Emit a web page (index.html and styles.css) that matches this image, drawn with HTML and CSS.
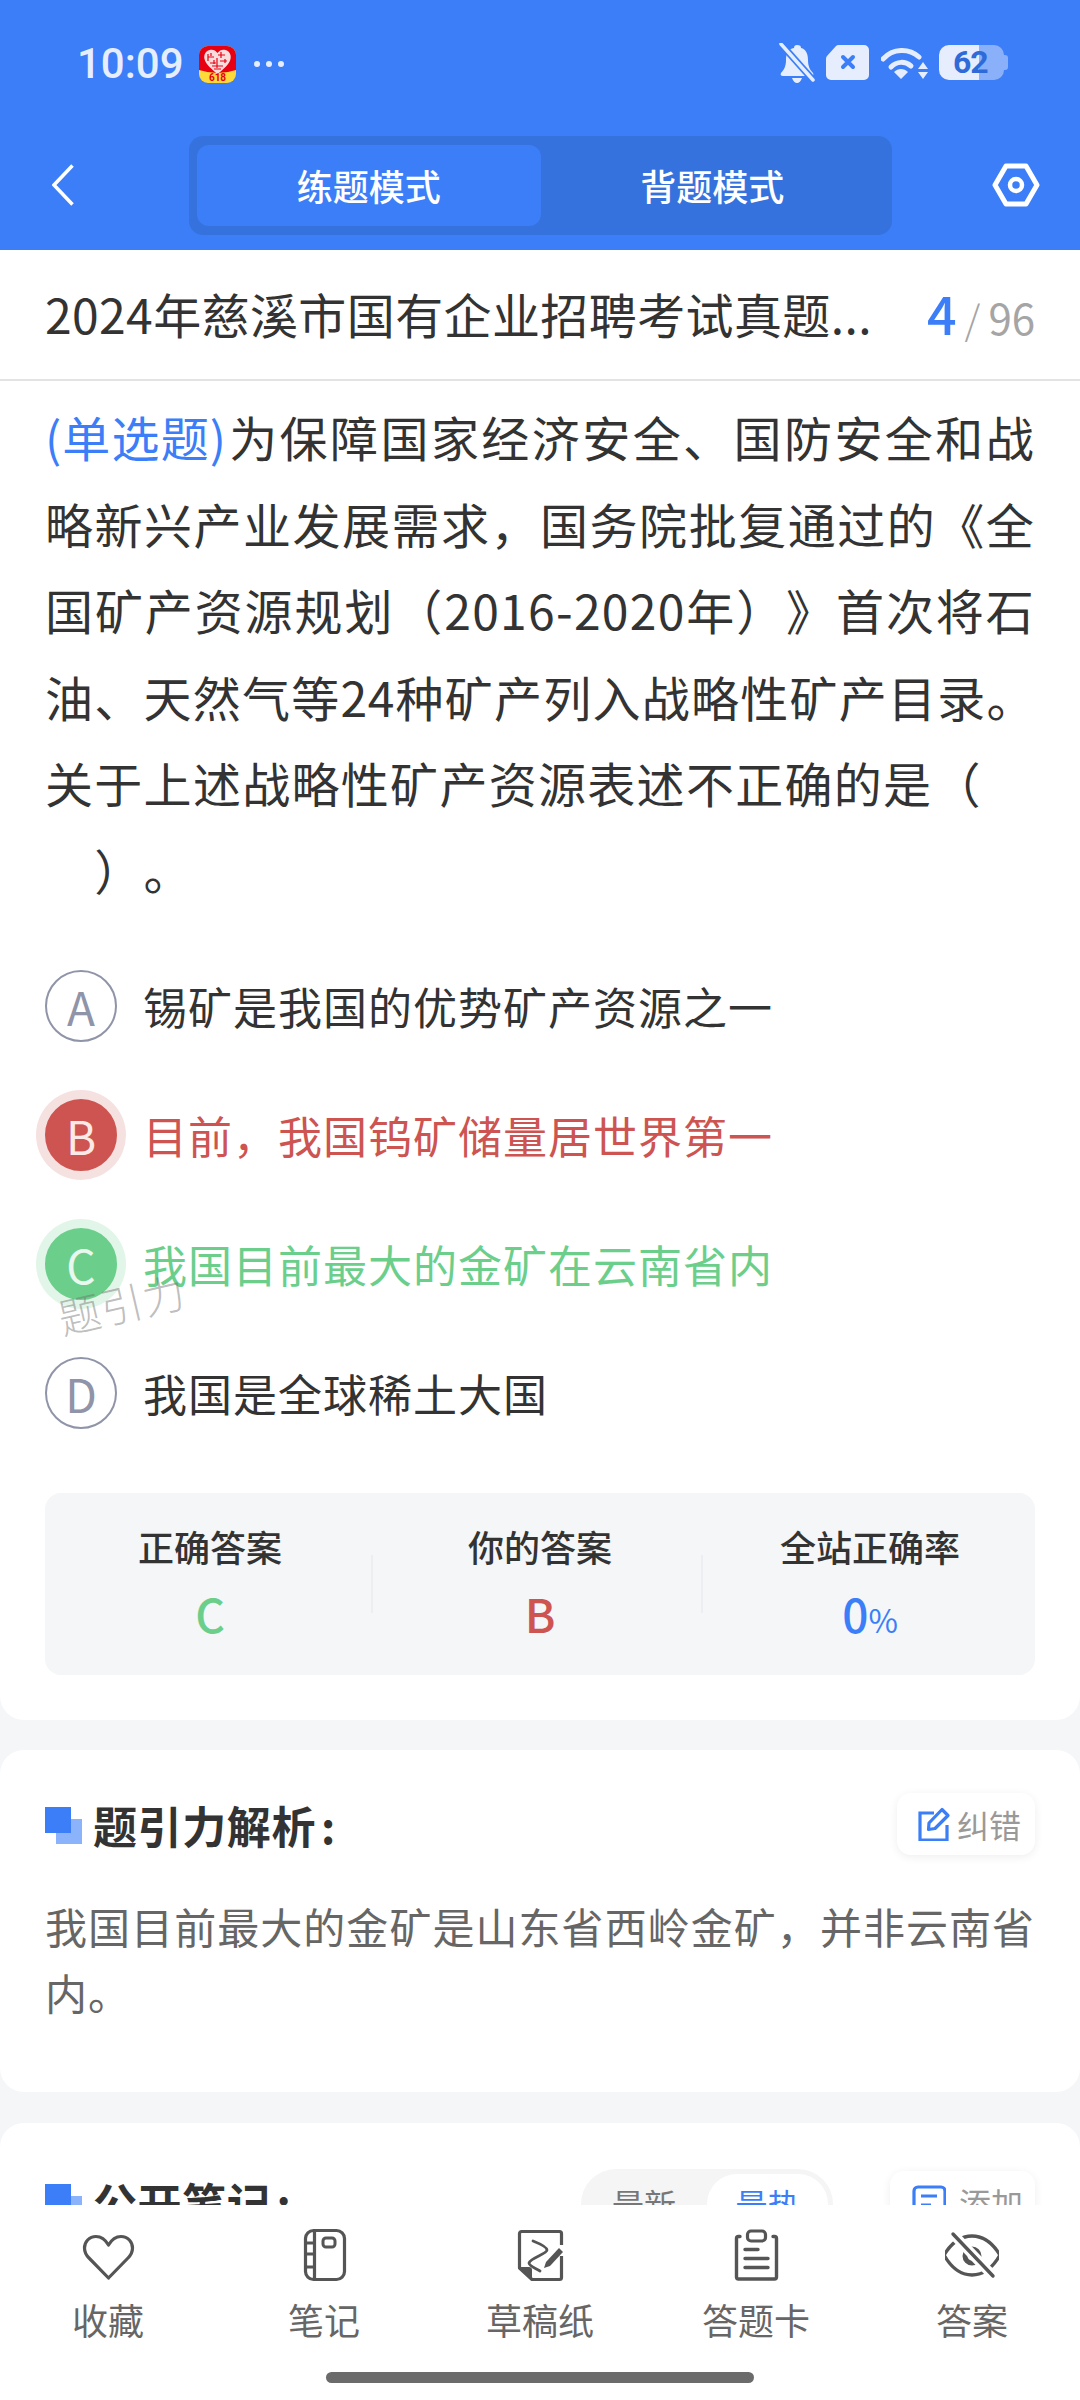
FILE: index.html
```html
<!DOCTYPE html>
<html lang="zh">
<head>
<meta charset="utf-8">
<title>练题模式</title>
<link rel="stylesheet" href="styles.css">
</head>
<body>
<div class="phone">
  <div class="scroll">
    <header class="top">
      <div class="status">
        <div class="status-left">
          <span class="time">10:09</span>
          <svg class="app" viewBox="0 0 37 37"><rect width="37" height="37" rx="9" fill="#ffd83a"/><path d="M0 9a9 9 0 0 1 9-9h19a9 9 0 0 1 9 9v15q-18 6-37 0z" fill="#e60012"/><path d="M18.500 7c-2-3-5-4-8-3-4 1-6 5-5 9 1 5 8 11 13 15 5-4 12-10 13-15 1-4-1-8-5-9-3-1-6 0-8 3z" fill="#f9dcdc"/><path d="M9 8v7M12 7v3M9 11h6M15 14v4M11 17h6M22 6v6M19 9h7M26 13v4M21 15h7M18 12v10M13 20h11M15 23h7" stroke="#e60012" stroke-width="1.200" fill="none"/><text class="app-text" x="18.500" y="34.500" text-anchor="middle">618</text></svg>
          <svg class="dots" viewBox="0 0 32 8"><circle cx="4" cy="4" r="3" fill="#e6eefe"/><circle cx="16" cy="4" r="3" fill="#e6eefe"/><circle cx="28" cy="4" r="3" fill="#e6eefe"/></svg>
        </div>
        <div class="status-right">
          <svg class="s-bell" viewBox="0 0 36 40"><path d="M18 2c-2 0-3 1-3 3C9 6 7 11 7 17c0 6-2 10-5 13-1 2 0 3 2 3h28c2 0 3-1 2-3-3-3-5-7-5-13 0-6-2-11-7-12 0-2-1-3-4-3zM13 35h10c-1 3-3 5-5 5s-4-2-5-5z" fill="#e6eefe"/><path d="M2 1l32 36" stroke="#3b7ef8" stroke-width="7"/><path d="M2 1l32 36" stroke="#e6eefe" stroke-width="3.500" stroke-linecap="round"/></svg>
          <svg class="s-sim" viewBox="0 0 43 35"><path d="M13 0h25a5 5 0 0 1 5 5v25a5 5 0 0 1-5 5H5a5 5 0 0 1-5-5V14q0-2 1-3l9-10q1-1 3-1z" fill="#e6eefe"/><path d="M17 12l10 10M27 12L17 22" stroke="#3b7ef8" stroke-width="4" stroke-linecap="round"/></svg>
          <svg class="s-wifi" viewBox="0 0 47 34"><path d="M2 13C12 2 28 2 38 11" fill="none" stroke="#e6eefe" stroke-width="5" stroke-linecap="round"/><path d="M10 21c6-6 14-6 20-1" fill="none" stroke="#e6eefe" stroke-width="5" stroke-linecap="round"/><path d="M13 26c4-4 10-4 14 0l-7 7z" fill="#e6eefe"/><path d="M42 16l5 7H37zM37 26h10l-5 7z" fill="#e6eefe"/></svg>
          <div class="battery">
            <span class="batt-num">62</span>
          </div>
        </div>
      </div>
      <nav class="bar">
        <svg class="back" viewBox="0 0 22 42"><path d="M20.500 1.500L2 21l18.500 19.500" fill="none" stroke="#fff" stroke-width="3.500"/></svg>
        <div class="tabs">
          <span class="tab tab-on">练题模式</span>
          <span class="tab">背题模式</span>
        </div>
        <svg class="hex" viewBox="0 0 48 44"><path d="M14 3h20l11 19-11 19H14L3 22z" fill="none" stroke="#fff" stroke-width="5" stroke-linejoin="round"/><circle cx="24" cy="22" r="6" fill="none" stroke="#fff" stroke-width="4.500"/></svg>
      </nav>
    </header>

    <section class="card question-card">
      <div class="title-row">
        <span class="paper-title">2024年慈溪市国有企业招聘考试真题...</span>
        <span class="counter"><b class="cur">4</b><i class="slash">/</i><span class="total">96</span></span>
      </div>
      <div class="question">
        <span class="ln"><span class="qtype">(单选题)</span><span>为保障国家经济安全、国防安全和战</span></span>
        <span class="ln">略新兴产业发展需求，国务院批复通过的《全</span>
        <span class="ln">国矿产资源规划（2016-2020年）》首次将石</span>
        <span class="ln ln-tight">油、天然气等24种矿产列入战略性矿产目录。</span>
        <span class="ln-end">关于上述战略性矿产资源表述不正确的是（</span>
        <span class="ln-end">　）。</span>
      </div>
      <div class="options">
        <div class="option"><span class="mark">A</span><span>锡矿是我国的优势矿产资源之一</span></div>
        <div class="option wrong"><span class="mark">B</span><span>目前，我国钨矿储量居世界第一</span></div>
        <div class="option right"><span class="mark">C</span><span>我国目前最大的金矿在云南省内</span><span class="watermark">题引力</span></div>
        <div class="option"><span class="mark">D</span><span>我国是全球稀土大国</span></div>
      </div>
      <div class="stats">
        <div class="stat"><span class="stat-label">正确答案</span><span class="stat-value green">C</span></div>
        <div class="stat"><span class="stat-label">你的答案</span><span class="stat-value red">B</span></div>
        <div class="stat"><span class="stat-label">全站正确率</span><span class="stat-value blue">0<small class="pct">%</small></span></div>
      </div>
    </section>

    <section class="card analysis">
      <div class="head">
        <h2 class="head-title"><span class="squares"></span>题引力解析<span class="colon">:</span></h2>
        <div class="chip">
          <svg class="chip-icon" viewBox="0 0 34 34"><path d="M17 6H3v27h27V18" fill="none" stroke="#3b7ef8" stroke-width="3.200"/><path d="M12 16L25 2.500l6 6L18 21.500l-6.500 1z" fill="none" stroke="#3b7ef8" stroke-width="3.200" stroke-linejoin="round"/></svg>
          <span>纠错</span>
        </div>
      </div>
      <p class="analysis-text">我国目前最大的金矿是山东省西岭金矿，并非云南省内。</p>
    </section>

    <section class="card notes">
      <div class="head">
        <h2 class="head-title"><span class="squares"></span>公开笔记<span class="colon">:</span></h2>
        <div class="head-right">
          <div class="segment"><span class="seg">最新</span><span class="seg seg-on">最热</span></div>
          <div class="chip chip-add">
            <svg class="chip-icon" viewBox="0 0 34 34"><rect x="2" y="2" width="31" height="29" rx="4" fill="none" stroke="#3b7ef8" stroke-width="3.200"/><path d="M9 11h16M9 20h10" stroke="#3b7ef8" stroke-width="3.200"/></svg>
            <span>添加</span>
          </div>
        </div>
      </div>
    </section>
  </div>

  <footer class="dock">
    <div class="tools">
      <div class="tool">
        <svg class="tool-icon" viewBox="0 0 54 54"><path d="M27.500 17C24 11 20 8.500 15 8.500 8 8.500 3.500 14 3.500 20c0 4 1.500 7 4.500 10l19.500 20L47 30c3-3 4.500-6 4.500-10 0-6-4.500-11.500-11.500-11.500-5 0-9 2.500-12.500 8.500z" fill="none" stroke="#555" stroke-width="3.200" stroke-linejoin="round"/></svg>
        <span>收藏</span>
      </div>
      <div class="tool">
        <svg class="tool-icon" viewBox="0 0 54 54"><rect x="8.500" y="2.500" width="39" height="49" rx="8" fill="none" stroke="#555" stroke-width="3.200"/><path d="M17.500 2.500v49M8.500 15h9M8.500 26h9M8.500 39h9" fill="none" stroke="#555" stroke-width="3.200"/><rect x="26" y="10" width="12" height="9" rx="3" fill="none" stroke="#555" stroke-width="3"/></svg>
        <span>笔记</span>
      </div>
      <div class="tool">
        <svg class="tool-icon" viewBox="0 0 54 54"><path d="M48.500 17V5.500a2 2 0 0 0-2-2H8.500a2 2 0 0 0-2 2V40L19 51.500h27.500a2 2 0 0 0 2-2V28" fill="none" stroke="#555" stroke-width="3.200" stroke-linejoin="round"/><path d="M6.500 39H16q3 0 3 3v9.500z" fill="#555"/><path d="M20 13c5 2 14 6 14 9 0 4-17 8-18 13 0 3 6 5 11 8" fill="none" stroke="#555" stroke-width="2.800" stroke-linecap="round"/><path d="M31 40l2-6 13-14 4 4-13 14z" fill="#555"/></svg>
        <span>草稿纸</span>
      </div>
      <div class="tool">
        <svg class="tool-icon" viewBox="0 0 54 54"><path d="M11 8.500H9.500a2 2 0 0 0-2 2V49a2 2 0 0 0 2 2h36a2 2 0 0 0 2-2V10.500a2 2 0 0 0-2-2H44" fill="none" stroke="#555" stroke-width="3.400" stroke-linecap="round"/><rect x="18.500" y="3" width="18" height="10" rx="3.500" fill="none" stroke="#555" stroke-width="3.200"/><path d="M16 21.500h13M16 30.500h23M16 39.500h23" stroke="#555" stroke-width="3.400" stroke-linecap="round"/></svg>
        <span>答题卡</span>
      </div>
      <div class="tool">
        <svg class="tool-icon" viewBox="0 0 54 54"><path d="M-1 27C7 14 16 8 27 8s20 6 28 19C47 41 38 47 27 47S7 41-1 27z" fill="none" stroke="#555" stroke-width="3.400"/><circle cx="27" cy="28" r="7" fill="none" stroke="#555" stroke-width="5"/><path d="M7 5l42 44" stroke="#fff" stroke-width="10"/><path d="M8 6l40 42" stroke="#555" stroke-width="3.400" stroke-linecap="round"/></svg>
        <span>答案</span>
      </div>
    </div>
    <div class="home-bar"></div>
  </footer>
</div>
</body>
</html>
```

FILE: styles.css
```css
* { box-sizing: border-box; margin: 0; padding: 0; }
html, body { width: 1080px; height: 2400px; overflow: hidden; }
body { font-family: "Noto Sans CJK SC", "Noto Sans", sans-serif; color: #333; background: #f4f6f8; text-spacing-trim: space-all; }
svg { display: block; flex: none; }

.phone { width: 1080px; height: 2400px; display: flex; flex-direction: column; }
.scroll { height: 2205px; overflow: hidden; flex: none; }

.top { height: 250px; background: #3b7ef8; padding: 43px 40px 0 52px; }
.status { height: 42px; display: flex; justify-content: space-between; align-items: center; padding-left: 25px; }
.status-left, .status-right { display: flex; align-items: center; }
.time { font-family: Roboto, sans-serif; font-weight: 500; font-size: 42px; color: #e6eefe; width: 122px; line-height: 42px; }
.app { width: 37px; height: 37px; }
.app-text { font-family: Roboto, sans-serif; font-weight: 700; font-size: 10px; fill: #e60012; }
.dots { width: 32px; height: 8px; margin-left: 17px; }
.status-right { padding-right: 36px; margin-top: -3px; }
.s-bell { width: 36px; height: 40px; }
.s-sim { width: 43px; height: 35px; margin-left: 11px; }
.s-wifi { width: 47px; height: 34px; margin-left: 12px; }
.battery { width: 65px; height: 35px; margin-left: 11px; border-radius: 10px; background: linear-gradient(90deg, #e6eefe 0 62%, #8ab0f9 62% 100%); position: relative; display: flex; align-items: center; padding-left: 14px; }
.battery::after { content: ""; position: absolute; right: -4px; top: 10px; width: 5px; height: 15px; border-radius: 0 3px 3px 0; background: #8ab0f9; }
.batt-num { font-family: Roboto, sans-serif; font-weight: 700; font-size: 32px; color: #2f6bd8; line-height: 35px; letter-spacing: -1px; }

.bar { height: 100px; margin-top: 50px; display: flex; align-items: center; position: relative; }
.back { width: 22px; height: 42px; }
.tabs { width: 703px; height: 99px; margin-left: 115px; padding: 9px 8px; background: #3672dd; border-radius: 14px; display: flex; }
.tab { flex: 1; font-size: 36px; font-weight: 500; color: #fff; display: flex; align-items: center; justify-content: center; border-radius: 12px; }
.tab-on { background: #3b7ef8; }
.hex { width: 48px; height: 44px; margin-left: 100px; }

.card { background: #fff; padding: 0 45px; }
.question-card { height: 1470px; border-radius: 0 0 24px 24px; }
.title-row { height: 131px; margin: 0 -45px; padding: 0 45px 4px; border-bottom: 2px solid #e3e3e3; display: flex; align-items: center; justify-content: space-between; }
.paper-title { font-size: 48px; color: #333; white-space: nowrap; letter-spacing: .4px; }
.counter { display: flex; align-items: baseline; }
.cur { font-weight: 500; font-size: 52px; color: #3b7ef8; }
.slash { font-style: normal; font-size: 40px; color: #a5a5a5; margin: 0 8px; font-weight: 300; }
.total { font-size: 42px; color: #a5a5a5; }

.question { margin-top: 12px; font-size: 48px; line-height: 86.6px; letter-spacing: 1.300px; color: #333; }
.ln { display: block; text-align: justify; text-align-last: justify; }
.ln-tight { letter-spacing: .6px; }
.ln-end { display: block; }
.qtype { color: #3b7ef8; letter-spacing: 0; margin-right: 2px; }

.options { margin-top: 29px; }
.option { height: 129px; display: flex; align-items: center; gap: 26px; font-size: 44px; letter-spacing: 1px; color: #333; position: relative; }
.mark { width: 72px; height: 72px; border-radius: 50%; border: 2px solid #8f94a8; color: #8f94a8; display: flex; align-items: center; justify-content: center; font-size: 46px; font-weight: 400; flex: none; letter-spacing: 0; }
.wrong { color: #cd5450; }
.wrong .mark { background: #cd5450; border-color: #cd5450; color: #fbe9e8; box-shadow: 0 0 0 9px #f6e1e1; }
.right { color: #6bcf8b; }
.right .mark { background: #6bcf8b; border-color: #6bcf8b; color: #e8f8ee; box-shadow: 0 0 0 9px #e1f6e8; }
.watermark { position: absolute; left: 12px; top: 72px; font-size: 42px; font-weight: 300; color: rgba(110, 110, 110, .45); letter-spacing: 1px; transform: rotate(-13deg); }

.stats { margin-top: 35px; height: 182px; background: #f4f6f8; border-radius: 16px; display: flex; position: relative; }
.stat { flex: 1; display: flex; flex-direction: column; align-items: center; padding-top: 28px; position: relative; }
.stat + .stat::before { content: ""; position: absolute; left: -4px; top: 62px; height: 58px; width: 2px; background: #eceef1; }
.stat-label { font-size: 36px; font-weight: 500; line-height: 50px; color: #333; }
.stat-value { font-size: 46px; font-weight: 500; line-height: 68px; margin-top: 8px; }
.pct { font-size: 32px; font-weight: 400; }
.green { color: #6bcf8b; }
.red { color: #cd5450; }
.blue { color: #3b7ef8; }

.analysis { margin-top: 30px; height: 342px; border-radius: 24px; padding-top: 45px; }
.analysis .chip { margin-top: -2px; }
.notes { margin-top: 31px; height: 200px; border-radius: 24px 24px 0 0; padding-top: 49px; }
.head { height: 60px; display: flex; align-items: center; justify-content: space-between; }
.head-title { display: flex; align-items: center; font-size: 44px; font-weight: 700; color: #333; line-height: 60px; letter-spacing: .6px; }
.colon { margin-left: 5px; }
.squares { width: 37px; height: 37px; margin-right: 11px; position: relative; display: block; }
.squares::before { content: ""; position: absolute; right: 0; bottom: 0; width: 26px; height: 25px; background: #8ab3fb; }
.squares::after { content: ""; position: absolute; left: 0; top: 0; width: 26px; height: 26px; background: #3b7ef8; }
.chip { width: 138px; height: 62px; background: #fff; border-radius: 14px; box-shadow: 0 2px 10px rgba(0, 0, 0, .07); display: flex; align-items: center; gap: 6px; padding-left: 20px; font-size: 32px; color: #999; }
.chip-icon { width: 34px; height: 34px; }
.analysis-text { margin-top: 38px; font-size: 42px; line-height: 66px; letter-spacing: .9px; color: #666; text-align: justify; }

.head-right { display: flex; align-items: flex-start; gap: 57px; }
.segment { width: 252px; height: 70px; margin-top: 4px; background: #f5f5f5; border-radius: 35px; display: flex; padding: 5px 5px 0 0; font-size: 32px; color: #777; }
.seg { flex: 1; display: flex; align-items: center; justify-content: center; padding-bottom: 8px; }
.seg-on { background: #fff; color: #3b7ef8; border-radius: 30px; flex: none; width: 121px; }
.chip-add { width: 145px; margin-top: 6px; padding-left: 22px; gap: 13px; }

.dock { flex: 1; background: #fff; display: flex; flex-direction: column; align-items: center; position: relative; }
.tools { width: 1080px; display: flex; padding-top: 23px; }
.tool { width: 216px; display: flex; flex-direction: column; align-items: center; font-size: 36px; line-height: 50px; color: #666; }
.tool-icon { width: 54px; height: 54px; margin-bottom: 12px; }
.home-bar { position: absolute; left: 326px; top: 167px; width: 428px; height: 11px; border-radius: 6px; background: #6b6b6b; }
```
